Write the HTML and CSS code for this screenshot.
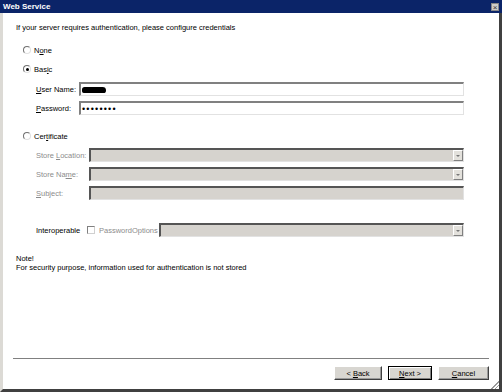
FILE: index.html
```html
<!DOCTYPE html>
<html lang="en">
<head>
  <meta charset="UTF-8">
  <title>Web Service</title>
  <link rel="stylesheet" href="styles.css">
</head>
<body>
<div class="window">
  <div class="titlebar">
    <span class="title">Web Service</span>
    <span class="close">&#215;</span>
  </div>

  <div class="content">
    <p class="intro">If your server requires authentication, please configure credentials</p>

    <div class="radio-row first">
      <span class="radio"></span>
      <span>N<u>o</u>ne</span>
    </div>

    <div class="radio-row basic">
      <span class="radio checked"></span>
      <span>Bas<u>i</u>c</span>
    </div>

    <div class="field user">
      <label class="label-short"><u>U</u>ser Name:</label>
      <div class="box">
        <span class="blob"></span>
      </div>
    </div>

    <div class="field">
      <label class="label-short"><u>P</u>assword:</label>
      <div class="box">
        <span class="dots">&#8226;&#8226;&#8226;&#8226;&#8226;&#8226;&#8226;&#8226;</span>
      </div>
    </div>

    <div class="radio-row cert">
      <span class="radio"></span>
      <span>Cer<u>t</u>ificate</span>
    </div>

    <div class="field store">
      <label class="label-long disabled">Store <u>L</u>ocation:</label>
      <div class="box off combo"><span class="drop"></span></div>
    </div>

    <div class="field">
      <label class="label-long disabled">Store Na<u>m</u>e:</label>
      <div class="box off combo"><span class="drop"></span></div>
    </div>

    <div class="field">
      <label class="label-long disabled"><u>S</u>ubject:</label>
      <div class="box off"></div>
    </div>

    <div class="field interop">
      <label class="interop-label">Interoperable</label>
      <span class="check"></span>
      <span class="disabled opt">PasswordOptions</span>
      <div class="box off combo"><span class="drop"></span></div>
    </div>

    <div class="note">
      <p>Note!</p>
      <p>For security purpose, information used for authentication is not stored</p>
    </div>
  </div>

  <div class="footer">
    <div class="separator"></div>
    <div class="buttons">
      <button class="btn back">&lt; <u>B</u>ack</button>
      <button class="btn next"><u>N</u>ext &gt;</button>
      <button class="btn cancel"><u>C</u>ancel</button>
    </div>
    <span class="grip"></span>
  </div>
</div>
</body>
</html>
```

FILE: styles.css
```css
* {
    margin: 0;
    padding: 0;
    box-sizing: border-box;
}

body {
    background-color: #ffffff;
    font-family: 'Liberation Sans', Arial, sans-serif;
    font-size: 7.5px;
    color: #000000;
}

u {
    text-decoration: underline;
}

.window {
    width: 502px;
    height: 392px;
    display: flex;
    flex-direction: column;
    border-left: 3px solid #dcdad5;
    border-right: 3px solid #404040;
    border-bottom: 3px solid #404040;
    position: relative;
    background: #ffffff;
}

.titlebar {
    height: 13px;
    margin-left: -3px;
    margin-right: -3px;
    background-color: #0b2468;
    color: #ffffff;
    display: flex;
    justify-content: space-between;
    align-items: center;
    padding: 0 3px 0 3px;
}

.title {
    font-weight: 700;
    font-size: 8px;
}

.close {
    width: 8px;
    height: 8px;
    background: #cfcdc8;
    color: #333;
    font-size: 8px;
    line-height: 8px;
    text-align: center;
    border: 1px solid #888;
}

.content {
    flex: 1;
    padding-left: 13px;
}

.intro {
    margin-top: 10px;
    height: 10px;
    line-height: 10px;
}

.radio-row {
    display: flex;
    align-items: center;
    gap: 3px;
    height: 10px;
    padding-left: 7px;
}

.radio-row.first { margin-top: 12px; }
.radio-row.basic { margin-top: 9px; }
.radio-row.cert { margin-top: 16px; }

.radio {
    width: 8px;
    height: 8px;
    border-radius: 50%;
    border: 1px solid #707070;
    border-right-color: #e0e0e0;
    border-bottom-color: #e0e0e0;
    background: #ffffff;
    position: relative;
}

.radio.checked::after {
    content: '';
    position: absolute;
    left: 1.5px;
    top: 1.5px;
    width: 3px;
    height: 3px;
    border-radius: 50%;
    background: #000;
}

.field {
    display: flex;
    align-items: center;
    height: 14px;
    margin-top: 5px;
    padding-left: 20px;
    padding-right: 35px;
}

.field.user { margin-top: 8px; }
.field.store { margin-top: 7px; }
.field.interop { margin-top: 23px; }

.label-short {
    width: 43px;
}

.label-long {
    width: 53px;
}

.disabled {
    color: #8c8c8c;
}

.box {
    flex: 1;
    height: 14px;
    background: #ffffff;
    border: 1px solid #e2e2e2;
    border-top: 2px solid #808080;
    border-left: 2px solid #808080;
    display: flex;
    align-items: center;
    position: relative;
}

.box.off {
    background: #d6d3ce;
    border-top-color: #555;
    border-left-color: #555;
}

.drop {
    position: absolute;
    right: 0;
    top: 0;
    width: 10px;
    height: 11px;
    background: #e3e1dc;
    border: 1px solid #ffffff;
    border-right-color: #808080;
    border-bottom-color: #808080;
}

.drop::after {
    content: '';
    position: absolute;
    left: 2px;
    top: 4px;
    border-left: 2px solid transparent;
    border-right: 2px solid transparent;
    border-top: 2px solid #777;
}

.blob {
    display: block;
    margin-left: 1px;
    width: 24px;
    height: 6px;
    background: #000;
    border-radius: 3px 4px 3px 2px;
}

.dots {
    padding-left: 1px;
    font-size: 9px;
    letter-spacing: 1.2px;
    line-height: 10px;
}

.interop-label {
    width: 51px;
}

.check {
    width: 8px;
    height: 8px;
    background: #fff;
    border: 1px solid #808080;
    border-right-color: #d0d0d0;
    border-bottom-color: #d0d0d0;
}

.opt {
    margin-left: 4px;
    width: 60px;
}

.note {
    margin-top: 17px;
    line-height: 9px;
}

.footer {
    height: 31px;
    position: relative;
}

.separator {
    margin: 0 10px;
    height: 2px;
    border-top: 1px solid #808080;
    border-bottom: 1px solid #ffffff;
}

.buttons {
    display: flex;
    justify-content: flex-end;
    gap: 6px;
    margin-top: 6px;
    padding-right: 10px;
}

.btn {
    height: 14px;
    font-family: 'Liberation Sans', Arial, sans-serif;
    font-size: 7.5px;
    color: #000;
    background: #d8d6d1;
    border: 1px solid #ffffff;
    border-right-color: #404040;
    border-bottom-color: #404040;
    box-shadow: inset -1px -1px 0 #9a9a9a;
}

.back { width: 48px; }
.next {
    width: 44px;
    border: 1px solid #000;
    box-shadow: inset 1px 1px 0 #fff, inset -1px -1px 0 #808080;
}
.cancel { width: 51px; }

.grip {
    position: absolute;
    right: 0;
    bottom: 0;
    width: 8px;
    height: 8px;
    background: linear-gradient(135deg, transparent 50%, #999 50%, #999 58%, transparent 58%, transparent 70%, #999 70%, #999 78%, transparent 78%);
}
```
